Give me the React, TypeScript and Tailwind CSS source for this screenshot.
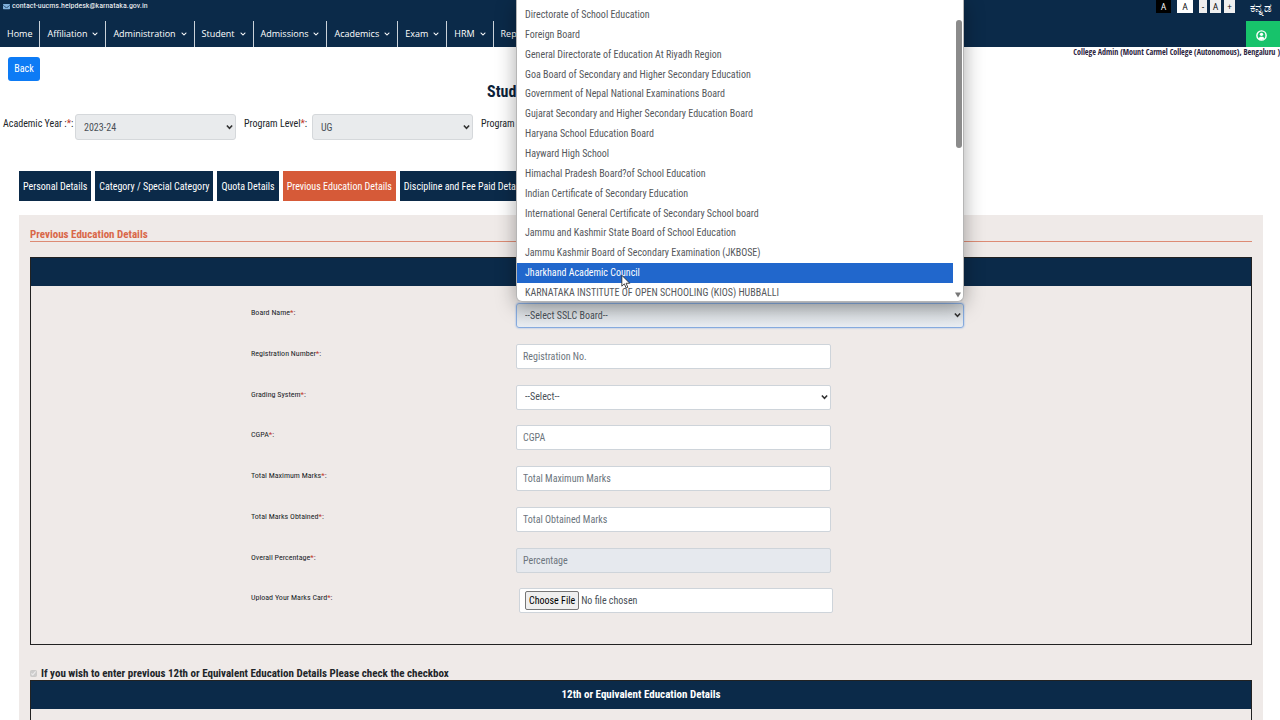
import type { ReactNode } from "react";
import { FaChevronDown, FaEnvelope } from "react-icons/fa";

const navItems = ["Affiliation", "Administration", "Student", "Admissions", "Academics", "Exam", "HRM", "Reports"];

const tabs = [
  "Personal Details",
  "Category / Special Category",
  "Quota Details",
  "Previous Education Details",
  "Discipline and Fee Paid Details",
];
const activeTab = "Previous Education Details";

const boards = [
  "Directorate of School Education",
  "Foreign Board",
  "General Directorate of Education At Riyadh Region",
  "Goa Board of Secondary and Higher Secondary Education",
  "Government of Nepal National Examinations Board",
  "Gujarat Secondary and Higher Secondary Education Board",
  "Haryana School Education Board",
  "Hayward High School",
  "Himachal Pradesh Board?of School Education",
  "Indian Certificate of Secondary Education",
  "International General Certificate of Secondary School board",
  "Jammu and Kashmir State Board of School Education",
  "Jammu Kashmir Board of Secondary Examination (JKBOSE)",
  "Jharkhand Academic Council",
  "KARNATAKA INSTITUTE OF OPEN SCHOOLING (KIOS) HUBBALLI",
];
const hoveredBoard = "Jharkhand Academic Council";

const control = "h-[25px] rounded-[2px] border border-[#ced4da] bg-white text-[10px] text-[#495057] placeholder:text-[#6c757d]";

function Chevron({ className = "" }: { className?: string }) {
  return (
    <svg viewBox="0 0 8 6" className={`pointer-events-none absolute h-[6px] w-[7px] ${className}`} fill="none" stroke="#333" strokeWidth="1.8">
      <path d="M1 1.2 4 4.4 7 1.2" />
    </svg>
  );
}

function Star() {
  return <span className="text-[#c0392b]">*</span>;
}

function TopBar() {
  return (
    <div className="flex h-[21px] items-start justify-between pl-[3px] pr-2">
      <a href="mailto:contact-uucms.helpdesk@karnataka.gov.in" className="flex h-3 items-center gap-[2px] text-[8px] text-white">
        <FaEnvelope className="size-[7px] text-[#7fb0dc]" />
        contact-uucms.helpdesk@karnataka.gov.in
      </a>
      <div className="flex items-start font-['Noto_Sans',sans-serif] text-[8px] leading-[13px]">
        <button className="mr-[6px] h-[13px] w-[15px] bg-black text-white">A</button>
        <button className="mr-[6px] h-[13px] w-[16px] bg-white text-black">A</button>
        <button className="mr-[3px] h-[13px] w-[8px] bg-[#efefef] text-black">-</button>
        <button className="mr-[3px] h-[13px] w-[11px] bg-[#efefef] text-black">A</button>
        <button className="mr-[15px] h-[13px] w-[11px] bg-[#efefef] text-black">+</button>
        <a href="#kn" className="text-[12px] leading-[16px] text-white">ಕನ್ನಡ</a>
      </div>
    </div>
  );
}

function AccountIcon() {
  return (
    <svg viewBox="0 0 20 20" className="size-[11px]" fill="none" stroke="currentColor" strokeWidth="2.6">
      <circle cx="10" cy="10" r="8.4" />
      <circle cx="10" cy="7.8" r="3" fill="currentColor" stroke="none" />
      <path d="M4.5 15.5c1.2-2.6 3.2-3.3 5.5-3.3s4.300.7 5.500 3.300L10 18z" fill="currentColor" stroke="none" />
    </svg>
  );
}

function Nav() {
  return (
    <nav className="flex h-[26px] font-['Open_Sans',sans-serif] text-[9px] font-medium text-white">
      <a href="#home" className="flex items-center border-r border-[#c9d1d9] px-[7px]">Home</a>
      {navItems.map((item) => (
        <a key={item} href={`#${item}`} className="flex items-center gap-[5px] border-r border-[#c9d1d9] px-[7px]">
          {item}
          <FaChevronDown className="size-[6px]" />
        </a>
      ))}
      <button aria-label="Account" className="ml-auto flex w-[34px] items-center justify-center bg-[#17c36b] pr-1 pt-[2px]">
        <AccountIcon />
      </button>
    </nav>
  );
}

function Filter({ id, label, value }: { id: string; label: ReactNode; value: string }) {
  return (
    <div className="flex">
      <label htmlFor={id} className="min-w-[68px] pt-[3px]">{label}</label>
      <div className="relative">
        <select id={id} disabled className="h-[26px] w-[161px] appearance-none rounded-[3px] border border-[#d5d8db] bg-[#e9ebed] pl-2 pt-[2px] text-[10px] text-[#495057] opacity-100">
          <option>{value}</option>
        </select>
        <Chevron className="right-[3px] top-[10px]" />
      </div>
    </div>
  );
}

function Cursor() {
  return (
    <svg viewBox="0 0 12 18" className="pointer-events-none absolute left-[105px] top-[274px] h-[16px] w-[10px]">
      <path d="M1 1v13l3-2.8 2.2 5 2-.9-2.1-4.8H10.5z" fill="#fff" stroke="#222" strokeWidth="1" />
    </svg>
  );
}

function BoardPopup() {
  return (
    <div className="absolute bottom-full left-0 z-10 mb-px h-[302px] w-full">
      <div className="relative h-full overflow-hidden rounded-b-md border border-t-0 border-[#b5b5b5] bg-white pt-[5px] shadow-[0_4px_20px_rgba(0,0,0,0.35)]">
        <ul role="listbox" aria-label="SSLC Board" className="mr-[10px] grid h-[298px] auto-rows-fr text-[10px] text-[#55585c]">
          {boards.map((board) => (
            <li
              key={board}
              role="option"
              aria-selected={board === hoveredBoard}
              className={board === hoveredBoard ? "flex items-center bg-[#2167cc] pl-2 text-white" : "flex items-center pl-2"}
            >
              {board}
            </li>
          ))}
        </ul>
        <div className="absolute right-px top-[20px] h-[128px] w-[6px] rounded-full bg-[#8b8b8b]" />
        <svg viewBox="0 0 6 6" className="absolute bottom-[3px] right-[2px] size-[6px]">
          <path d="M0 0.5h6L3 5.5z" fill="#777" />
        </svg>
      </div>
      <Cursor />
    </div>
  );
}

function Row({ id, label, children }: { id: string; label: string; children: ReactNode }) {
  return (
    <div className="grid grid-cols-[265px_1fr]">
      <label htmlFor={id} className="pt-1 text-[8px] leading-[12px] text-[#212529]">
        {label}
        <Star />:
      </label>
      <div>{children}</div>
    </div>
  );
}

function TextField({ id, label, placeholder, disabled = false }: { id: string; label: string; placeholder: string; disabled?: boolean }) {
  return (
    <Row id={id} label={label}>
      <input
        id={id}
        type="text"
        placeholder={placeholder}
        disabled={disabled}
        className={`${control} w-[315px] px-[6px] disabled:bg-[#e6e9ee]`}
      />
    </Row>
  );
}

export default function App() {
  return (
    <div className="h-screen overflow-hidden bg-white font-['Roboto_Condensed','Roboto',sans-serif] text-[10px] leading-[14px] text-[#212529]">
      <header className="bg-[#0b2a49]">
        <TopBar />
        <Nav />
      </header>

      <main>
        <p className="h-[10px] text-right font-['Open_Sans_Condensed','Roboto_Condensed',sans-serif] text-[8px] font-bold leading-[9px] text-[#2b2440]">
          College Admin (Mount Carmel College (Autonomous), Bengaluru )
        </p>
        <button className="ml-2 h-[24px] w-[32px] rounded-[3px] bg-[#0d7bf5] text-[10px] text-white">Back</button>
        <h1 className="pl-[487px] text-[16px] font-bold leading-[22px] text-[#0b2239]">Student Admission Details</h1>

        <section className="flex gap-2 pl-[3px] pt-[11px]">
          <Filter id="year" label={<span className="block w-[72px]">Academic Year :<Star />:</span>} value="2023-24" />
          <Filter id="level" label={<>Program Level<Star />:</>} value="UG" />
          <Filter id="program" label={<>Program <Star />:</>} value="B.Com" />
        </section>

        <div role="tablist" className="flex gap-1 pl-[19px] pt-[31px]">
          {tabs.map((tab) => (
            <button
              key={tab}
              role="tab"
              aria-selected={tab === activeTab}
              className={tab === activeTab ? "h-[30px] bg-[#d65a38] px-1 pt-[2px] text-white" : "h-[30px] bg-[#0b2a49] px-1 pt-[2px] text-white"}
            >
              {tab}
            </button>
          ))}
        </div>

        <section className="ml-[19px] mr-[17px] mt-[14px] bg-[#efeae8] px-[11px] pt-3">
          <h2 className="border-b border-[#dd8b74] pt-px text-[11px] font-bold leading-[13px] text-[#d96748]">Previous Education Details</h2>

          <div className="mt-[15px] h-[388px] border border-[#222]">
            <div className="h-[28px] bg-[#0b2a49]" />
            <div className="ml-[220px] mt-[17px] grid h-[326px] auto-rows-fr">
              <Row id="board" label="Board Name">
                <div className="relative w-[448px]">
                  <BoardPopup />
                  <select
                    id="board"
                    className="h-[25px] w-full appearance-none rounded-[3px] border border-[#86abdf] bg-linear-to-b from-[#cfd3d6] to-[#e9edf2] pl-2 text-[10px] text-[#495057] shadow-[0_0_2px_#86abdf]"
                  >
                    <option>--Select SSLC Board--</option>
                  </select>
                  <Chevron className="right-[3px] top-[9px]" />
                </div>
              </Row>
              <TextField id="reg" label="Registration Number" placeholder="Registration No." />
              <Row id="grading" label="Grading System">
                <div className="relative w-[315px]">
                  <select id="grading" className={`${control} w-full appearance-none pl-2`}>
                    <option>--Select--</option>
                  </select>
                  <Chevron className="right-[3px] top-[9px]" />
                </div>
              </Row>
              <TextField id="cgpa" label="CGPA" placeholder="CGPA" />
              <TextField id="max" label="Total Maximum Marks" placeholder="Total Maximum Marks" />
              <TextField id="obtained" label="Total Marks Obtained" placeholder="Total Obtained Marks" />
              <TextField id="percent" label="Overall Percentage" placeholder="Percentage" disabled />
              <Row id="card" label="Upload Your Marks Card">
                <input
                  id="card"
                  type="file"
                  className={`${control} ml-[3px] w-[314px] px-[5px] pt-[2px] file:mr-[2px] file:h-[19px] file:rounded-[2px] file:border file:border-solid file:border-[#767676] file:bg-[#efefef] file:px-[3px] file:text-[10px] file:text-black`}
                />
              </Row>
            </div>
          </div>

          <div className="mt-[21px] flex h-[14px] items-center gap-1">
            <input id="twelfth" type="checkbox" defaultChecked disabled className="size-[7px]" />
            <label htmlFor="twelfth" className="pt-px text-[11px] font-bold">
              If you wish to enter previous 12th or Equivalent Education Details Please check the checkbox
            </label>
          </div>
          <div className="h-[60px] border border-[#222]">
            <h3 className="h-[28px] bg-[#0b2a49] text-center text-[11px] font-bold leading-[28px] text-white">
              12th or Equivalent Education Details
            </h3>
          </div>
        </section>
      </main>
    </div>
  );
}
